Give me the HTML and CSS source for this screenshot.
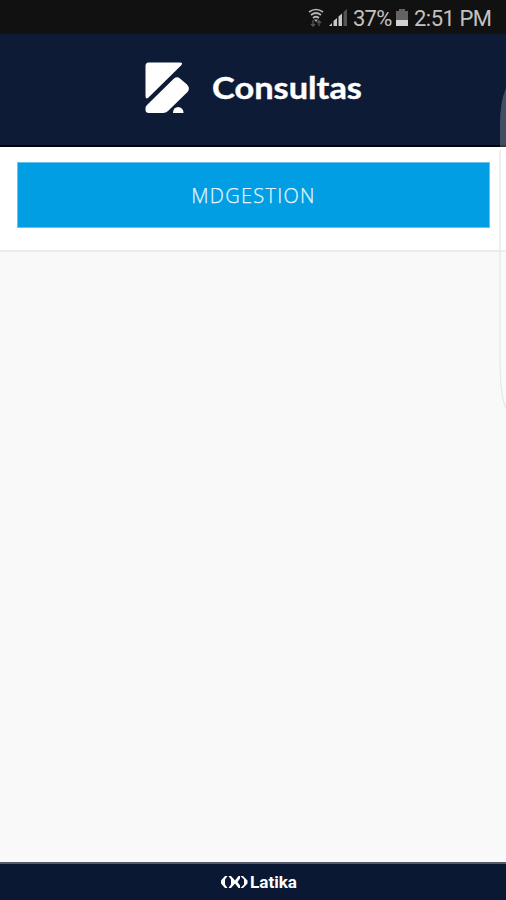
FILE: index.html
```html
<!DOCTYPE html>
<html lang="es">
<head>
<meta charset="utf-8">
<title>Consultas</title>
<link rel="stylesheet" href="styles.css">
</head>
<body>
<div class="screen">
  <div class="status">
    <svg class="wifi" width="16" height="20" viewBox="0 0 16 20" fill="none" stroke="#b4b4b4" stroke-width="1.7">
      <path d="M1 4Q8-1 15 4M3 7Q8 3 13 7M5 10Q8 7.500 11 10"/>
      <path d="M6 11.500h4L8 14z" fill="#b4b4b4" stroke="none"/>
      <path d="M5 12v6M3 16l2 2 2-2M11 18v-6M9 15l2-2 2 2" stroke="#555" stroke-width="1.3"/>
    </svg>
    <svg class="signal" width="19" height="18" viewBox="0 0 19 18">
      <path fill="#c8c8c8" d="M0 17l3-3v3zM4.500 12L8 9v8H4.500zM9.500 7.500L13 4.500V17H9.500z"/>
      <path fill="#555" d="M14.500 3L18 0v17h-3.500z"/>
    </svg>
    <span class="percent">37%</span>
    <svg class="battery" width="12" height="18" viewBox="0 0 12 18">
      <path fill="#636363" d="M3 0h6v2h3v9H0V2h3z"/>
      <path fill="#d2d2d2" d="M0 11h12v6H0z"/>
    </svg>
    <span class="clock">2:51 PM</span>
  </div>
  <header class="header">
    <svg class="logo" width="46" height="54" viewBox="0 0 46 54" fill="#fff">
      <path d="M4.500 1.500H36Q39.500 1.500 37 4.500L4.500 36.500Q1.500 39 1.500 35V5Q1.500 1.500 4.500 1.500z"/>
      <path d="M30 17.500Q33 15 36 17.500L43 23.500Q46.500 27.500 43.500 31L24 50Q22 52 19 52H5Q1.500 52 1.500 49V47Q1.500 45.500 3 44z"/>
      <path d="M29 52Q29 46 34.500 46Q39.500 47 39.500 52z"/>
    </svg>
    <svg class="title" width="152" height="42"><text x="0" y="30" textLength="150" lengthAdjust="spacingAndGlyphs">Consultas</text></svg>
  </header>
  <section class="panel">
    <button class="action">MDGESTION</button>
  </section>
  <main class="content"></main>
  <footer class="footer">
    <svg width="28" height="14" viewBox="0 0 28 14" fill="#fff">
      <path d="M5 1h2.500L5 4.500v5L7.500 13H5L1 8.500v-3z"/>
      <path d="M8.500 1H11l4 4.500L18.500 1H20v2.500L17.500 7 20 10.500V13h-1.500L15 8.500 11 13H8.500L11 9.500v-5z"/>
      <path d="M20.500 1H23l4.500 4.500v3L23 13h-2.500L24 9.500v-5z"/>
    </svg>
    <svg class="brand" width="49" height="20"><text x="1" y="15.500" textLength="47" lengthAdjust="spacingAndGlyphs">Latika</text></svg>
  </footer>
  <svg class="edge" width="7" height="322" viewBox="0 0 7 322">
    <path d="M7 0Q1 14 1 36V270Q1 308 7 320z" fill="#fff" fill-opacity=".22"/>
    <path d="M1 62V270Q1 308 7 320" fill="none" stroke="#e6e6e6" stroke-width="1.200"/>
  </svg>
</div>
</body>
</html>
```

FILE: styles.css
```css
* { box-sizing: border-box; }
body { margin: 0; }
.screen {
  position: relative;
  width: 506px;
  height: 900px;
  display: flex;
  flex-direction: column;
  overflow: hidden;
  background: #f9f9f9;
}
.status {
  height: 34px;
  flex: none;
  display: flex;
  align-items: flex-start;
  justify-content: flex-start;
  padding: 8px 0 0 308px;
  background: #111;
}
.percent, .clock {
  font: 22px/21px Roboto, sans-serif;
  color: #c2c2c2;
  white-space: nowrap;
}
.wifi { margin-right: 5px; }
.signal { margin: 1px 5px 0 0; }
.percent { width: 43px; letter-spacing: -.8px; }
.clock { letter-spacing: -.5px; }
.battery { margin: 1px 6px 0 0; }
.header {
  height: 113px;
  flex: none;
  display: flex;
  padding: 27px 0 0 144px;
  background: #0d1b36;
  border-bottom: 2px solid #020304;
}
.title { margin: 8px 0 0 22px; }
.title text {
  font: 700 31px Lato, sans-serif;
  fill: #fff;
  stroke: #fff;
  stroke-width: .4px;
}
.panel {
  height: 105px;
  flex: none;
  padding: 15px 16px 0 17px;
  background: #fff;
  border-bottom: 2px solid #ebebeb;
}
.action {
  display: block;
  width: 100%;
  height: 66px;
  padding: 1px 0 0;
  border: 1px solid #68c2ee;
  background: #029ee4;
  color: #e2f4ff;
  font: 300 20px "Open Sans", sans-serif;
  letter-spacing: 1.25px;
  -webkit-text-stroke: .25px #e2f4ff;
}
.content { flex: 1; }
.footer {
  height: 38px;
  flex: none;
  display: flex;
  align-items: center;
  padding-left: 220px;
  gap: 1px;
  background: #0b1833;
  border-top: 2px solid #555b67;
}
.brand text {
  font: 700 16px Roboto, sans-serif;
  fill: #fff;
}
.edge {
  position: absolute;
  right: 0;
  top: 88px;
}
```
